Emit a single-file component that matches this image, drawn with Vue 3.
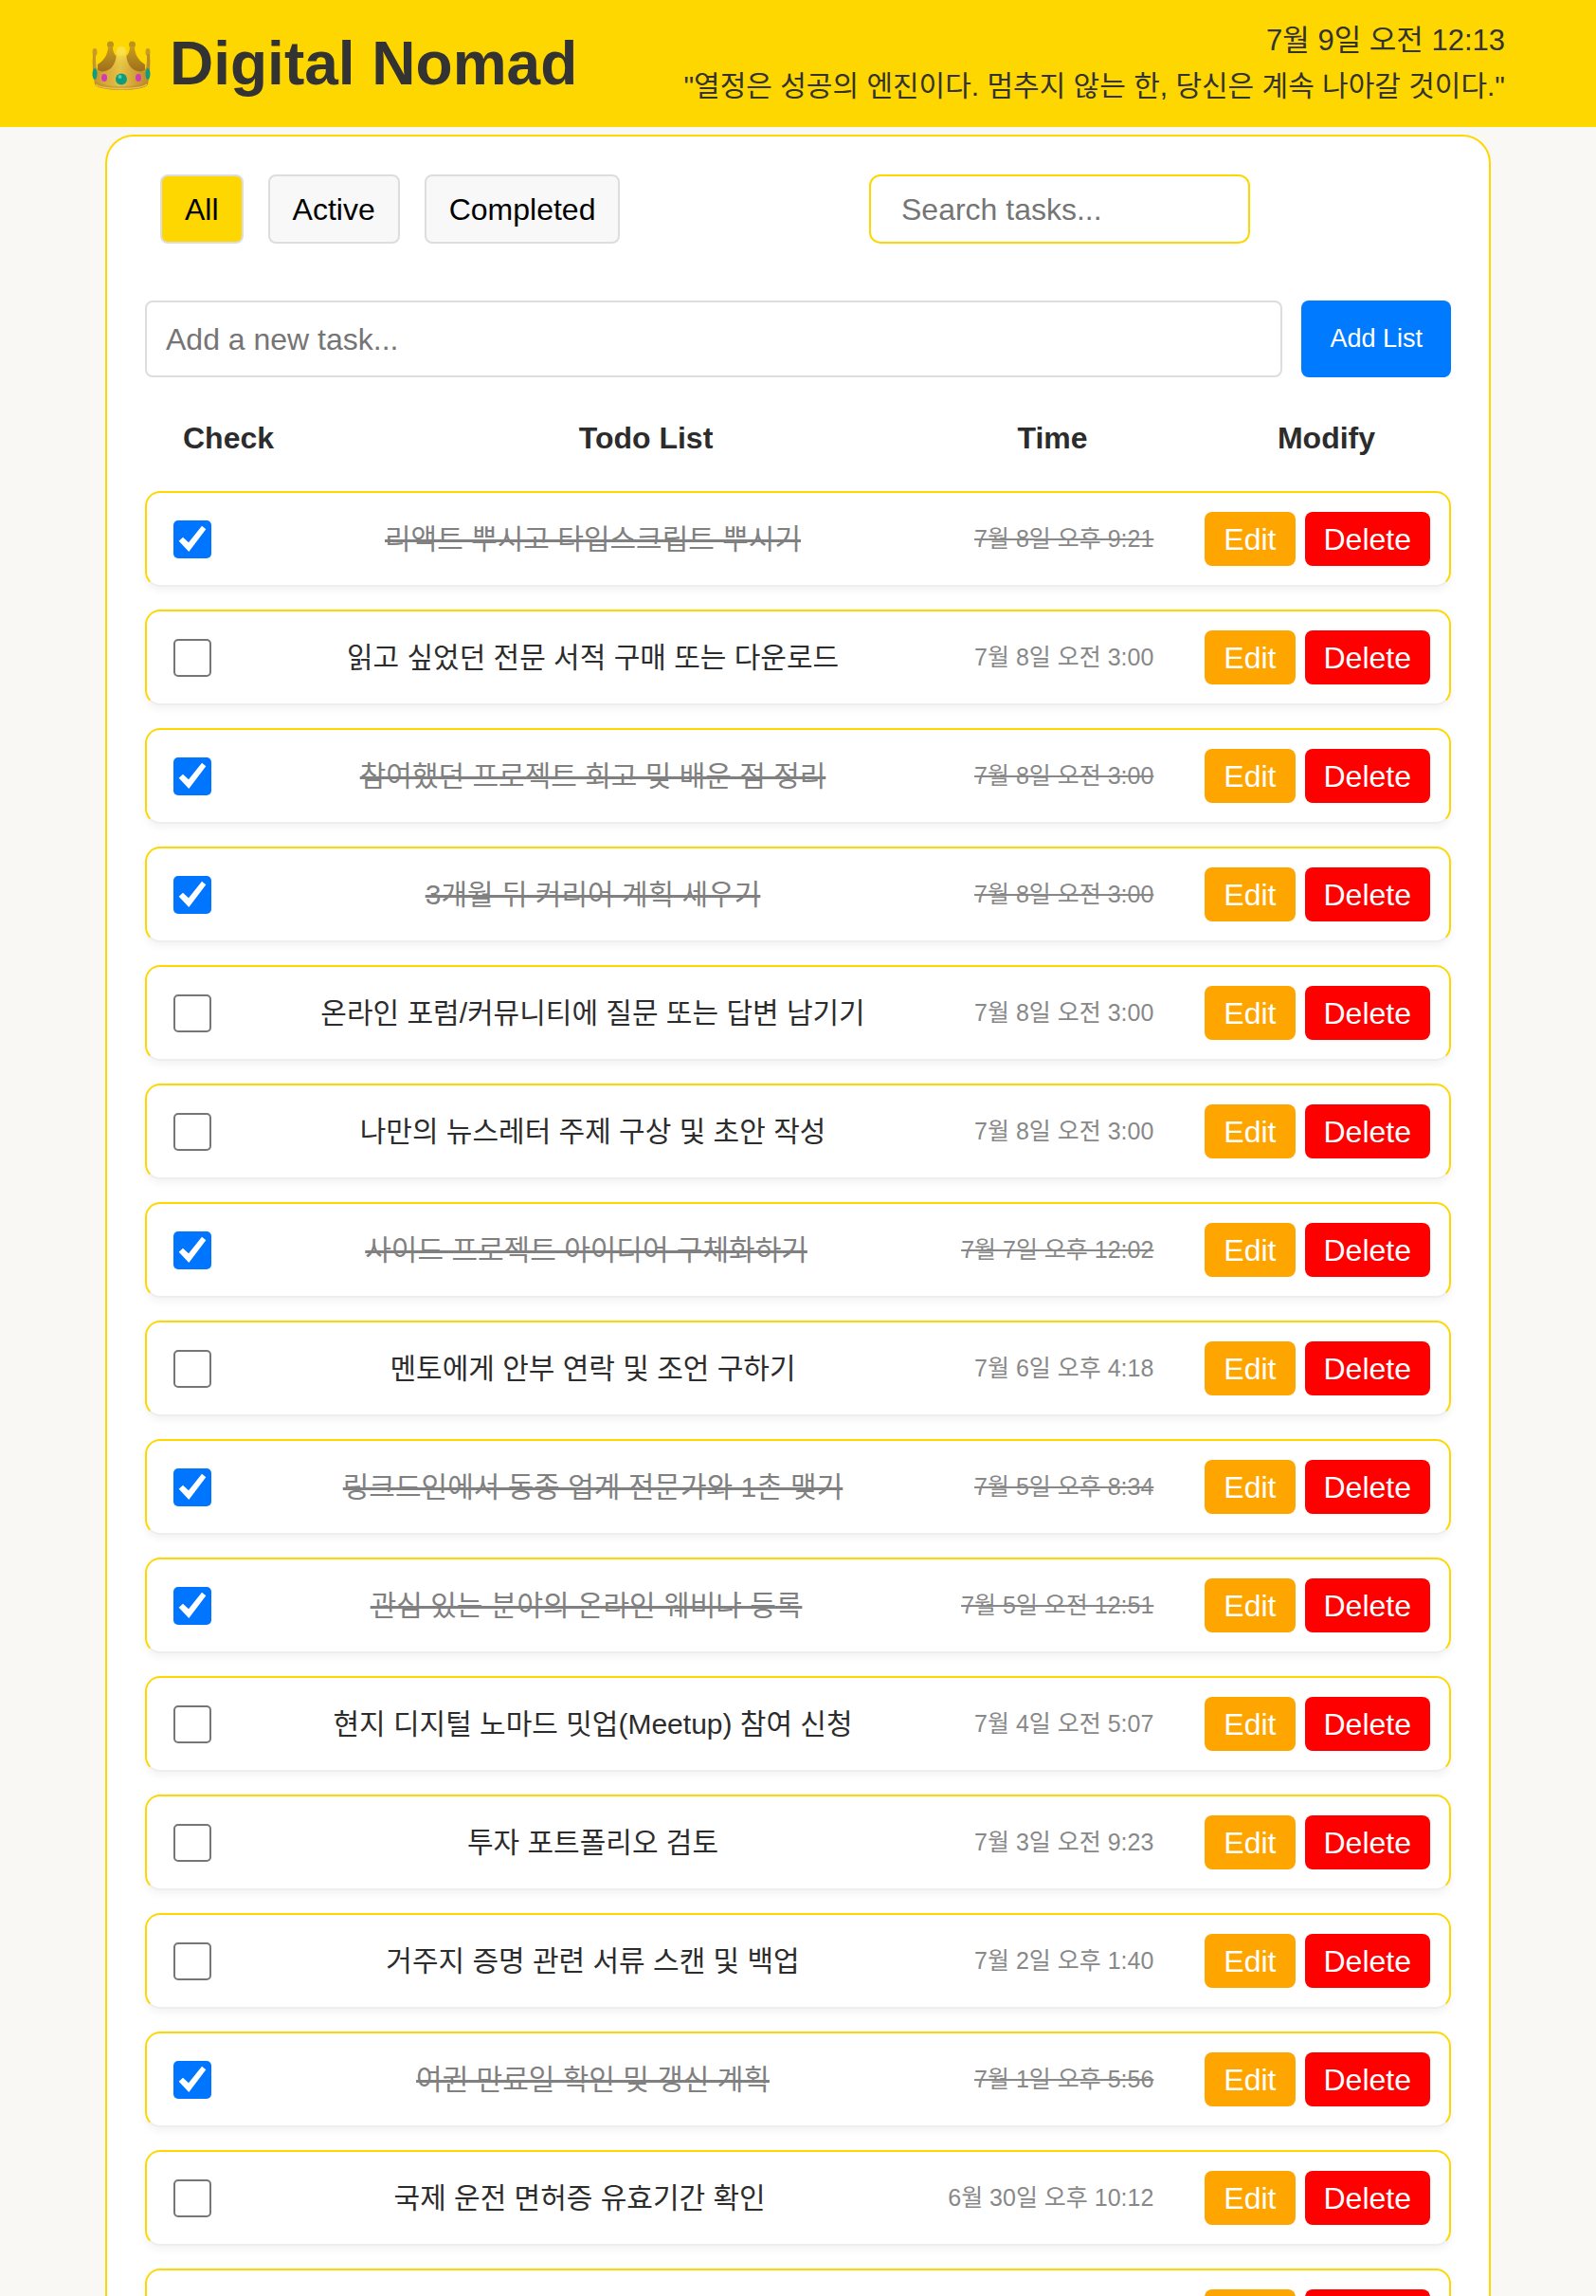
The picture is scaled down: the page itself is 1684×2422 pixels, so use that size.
<script setup>
import { computed, ref } from 'vue'

const filters = ['All', 'Active', 'Completed']
const filter = ref('All')
const search = ref('')
const draft = ref('')

const tasks = ref([
  { done: true, title: '리액트 뿌시고 타입스크립트 뿌시기', time: '7월 8일 오후 9:21' },
  { done: false, title: '읽고 싶었던 전문 서적 구매 또는 다운로드', time: '7월 8일 오전 3:00' },
  { done: true, title: '참여했던 프로젝트 회고 및 배운 점 정리', time: '7월 8일 오전 3:00' },
  { done: true, title: '3개월 뒤 커리어 계획 세우기', time: '7월 8일 오전 3:00' },
  { done: false, title: '온라인 포럼/커뮤니티에 질문 또는 답변 남기기', time: '7월 8일 오전 3:00' },
  { done: false, title: '나만의 뉴스레터 주제 구상 및 초안 작성', time: '7월 8일 오전 3:00' },
  { done: true, title: '사이드 프로젝트 아이디어 구체화하기', time: '7월 7일 오후 12:02' },
  { done: false, title: '멘토에게 안부 연락 및 조언 구하기', time: '7월 6일 오후 4:18' },
  { done: true, title: '링크드인에서 동종 업계 전문가와 1촌 맺기', time: '7월 5일 오후 8:34' },
  { done: true, title: '관심 있는 분야의 온라인 웨비나 등록', time: '7월 5일 오전 12:51' },
  { done: false, title: '현지 디지털 노마드 밋업(Meetup) 참여 신청', time: '7월 4일 오전 5:07' },
  { done: false, title: '투자 포트폴리오 검토', time: '7월 3일 오전 9:23' },
  { done: false, title: '거주지 증명 관련 서류 스캔 및 백업', time: '7월 2일 오후 1:40' },
  { done: true, title: '여권 만료일 확인 및 갱신 계획', time: '7월 1일 오후 5:56' },
  { done: false, title: '국제 운전 면허증 유효기간 확인', time: '6월 30일 오후 10:12' },
  { done: false, title: '', time: '' },
])

const visible = computed(() =>
  tasks.value.filter(
    (t) =>
      (filter.value === 'All' || t.done === (filter.value === 'Completed')) &&
      t.title.includes(search.value),
  ),
)

function addTask() {
  if (!draft.value.trim()) return
  tasks.value.unshift({ done: false, title: draft.value.trim(), time: '' })
  draft.value = ''
}

function removeTask(task) {
  tasks.value = tasks.value.filter((t) => t !== task)
}
</script>

<template>
  <div class="page">
    <header class="banner">
      <h1 class="brand">
        <svg class="crown" viewBox="0 0 64 64" aria-hidden="true">
          <defs>
            <linearGradient id="gold" x1="0" y1="0" x2="1" y2="0">
              <stop offset="0" stop-color="#c4932a" />
              <stop offset=".18" stop-color="#d3a535" />
              <stop offset=".48" stop-color="#e6c246" />
              <stop offset=".8" stop-color="#cc9a33" />
              <stop offset="1" stop-color="#b98a28" />
            </linearGradient>
            <linearGradient id="inner" x1="0" y1="0" x2="0" y2="1">
              <stop offset="0" stop-color="#c79c1c" />
              <stop offset="1" stop-color="#9a6a1c" />
            </linearGradient>
            <linearGradient id="spike" x1="0" y1="0" x2="0" y2="1">
              <stop offset="0" stop-color="#fbe04a" />
              <stop offset="1" stop-color="#e0b93f" stop-opacity="0" />
            </linearGradient>
          </defs>
          <circle cx="20.500" cy="12" r="3.500" fill="#bd931a" />
          <circle cx="43.500" cy="12" r="3.500" fill="#bd931a" />
          <path d="M18 14h5c0 6 2 9 5 11L20 43 7 41V33C14 29 18 22 18 14Z" fill="url(#inner)" />
          <path d="M46 14h-5c0 6-2 9-5 11l8 18 13-2V33C50 29 46 22 46 14Z" fill="url(#inner)" />
          <ellipse cx="4" cy="20" rx="2.500" ry="4" fill="#c99c22" />
          <ellipse cx="60" cy="20" rx="2.500" ry="4" fill="#c99c22" />
          <path
            d="M2 22h3c0 6 0 11 1 15 2 3 5 4 9 3 8-2 12-10 12-20h10c0 10 4 18 12 20 4 1 7 0 9-3 1-4 1-9 1-15h3c1 10 0 22-2 32-4 8-52 8-56 0C2 44 1 32 2 22Z"
            fill="url(#gold)"
          />
          <circle cx="32" cy="19" r="5" fill="#fbe04a" />
          <path d="M27 20h10c0 10 3 17 8 20H19c5-3 8-10 8-20Z" fill="url(#spike)" />
          <path d="M4 50c6 8 50 8 56 0v4c-6 8-50 8-56 0Z" fill="#b98728" opacity=".45" />
          <path d="M5 54c8 6 46 6 54 0" fill="none" stroke="#e6c44a" stroke-width="1.500" />
          <ellipse cx="4" cy="43" rx="2.500" ry="6" fill="#149b7d" />
          <ellipse cx="60" cy="43" rx="2.500" ry="6" fill="#149b7d" />
          <ellipse cx="14" cy="47" rx="3" ry="4" fill="#d23bb5" />
          <ellipse cx="50" cy="47" rx="3" ry="4" fill="#d23bb5" />
          <circle cx="32" cy="48.500" r="6" fill="#0f9c7c" />
          <circle cx="30.500" cy="46" r="2" fill="#58cbb0" />
        </svg>
        <span>Digital Nomad</span>
      </h1>
      <div class="status">
        <time class="now">7월 9일 오전 12:13</time>
        <p class="quote">"열정은 성공의 엔진이다. 멈추지 않는 한, 당신은 계속 나아갈 것이다."</p>
      </div>
    </header>

    <main class="card">
      <div class="toolbar">
        <div class="filters">
          <button
            v-for="name in filters"
            :key="name"
            type="button"
            class="filter"
            :class="{ active: filter === name }"
            @click="filter = name"
          >
            {{ name }}
          </button>
        </div>
        <input v-model="search" class="search" type="text" placeholder="Search tasks..." aria-label="Search tasks" />
      </div>

      <form class="add" @submit.prevent="addTask">
        <input v-model="draft" class="add-input" type="text" placeholder="Add a new task..." aria-label="New task" />
        <button class="add-button" type="submit">Add List</button>
      </form>

      <table class="list">
        <thead>
          <tr class="head">
            <th class="head-check">Check</th>
            <th>Todo List</th>
            <th>Time</th>
            <th>Modify</th>
          </tr>
        </thead>
        <tbody class="rows">
          <tr v-for="(task, i) in visible" :key="i" class="row" :class="{ done: task.done }">
            <td class="cell-check">
              <input v-model="task.done" class="check" type="checkbox" :aria-label="task.title" />
            </td>
            <td class="cell-title">{{ task.title }}</td>
            <td class="cell-time">{{ task.time }}</td>
            <td class="cell-actions">
              <button type="button" class="action edit">Edit</button>
              <button type="button" class="action delete" @click="removeTask(task)">Delete</button>
            </td>
          </tr>
        </tbody>
      </table>
    </main>
  </div>
</template>

<style>
body {
  margin: 0;
  background: #f9f8f4;
}
</style>

<style scoped>
.page {
  box-sizing: border-box;
  height: 100vh;
  overflow: hidden;
  color: #2c2c2c;
  font-family: "Liberation Sans", "Noto Sans CJK KR", sans-serif;
  font-size: 32px;
  line-height: 37px;
}

button,
input {
  box-sizing: border-box;
  margin: 0;
  font: inherit;
}

button {
  cursor: pointer;
}

.banner {
  display: flex;
  align-items: center;
  justify-content: space-between;
  padding: 19px 96px;
  background: #ffd700;
  color: #333;
}

.brand {
  display: flex;
  align-items: center;
  gap: 19px;
  margin: 0;
  font-size: 64px;
  line-height: 74px;
  white-space: nowrap;
}

.crown {
  width: 64px;
  height: 64px;
}

.status {
  display: flex;
  flex-direction: column;
  text-align: right;
  line-height: 48px;
}

.now {
  font-size: 31px;
}

.quote {
  margin: 0;
  font-size: 30px;
}

.card {
  margin: 8px 111px 0;
  padding: 40px;
  border: 2px solid #ffd700;
  border-radius: 30px;
  background: #fff;
}

.toolbar {
  display: flex;
  justify-content: space-between;
  padding: 0 212px 0 16px;
  margin-bottom: 60px;
}

.filters {
  display: flex;
  gap: 26px;
}

.filter {
  padding: 17px 24px 15px;
  border: 2px solid #ddd;
  border-radius: 8px;
  background: #f8f8f8;
  color: #000;
}

.filter.active {
  background: #ffd700;
}

.search {
  width: 402px;
  padding: 17px 32px 15px;
  border: 2px solid #ffd700;
  border-radius: 12px;
  background: #fff;
}

.add {
  display: flex;
  gap: 20px;
  margin-bottom: 46px;
}

.add-input {
  flex: 1;
  min-width: 0;
  padding: 21px 20px 19px;
  border: 2px solid #ddd;
  border-radius: 8px;
  background: #fff;
}

.search::placeholder,
.add-input::placeholder {
  color: #757575;
  opacity: 1;
}

.add-button {
  padding: 0 30px;
  border: 0;
  border-radius: 8px;
  background: #007bff;
  color: #fff;
  font-size: 27px;
}

.list {
  display: block;
}

.list thead {
  display: block;
}

.head {
  display: grid;
  grid-template-columns: 257px 1fr 315px 263px;
  margin-bottom: 37px;
}

.head th {
  padding: 0;
  font-weight: bold;
}

.head .head-check {
  padding-left: 40px;
  text-align: left;
}

.rows {
  display: flex;
  flex-direction: column;
  gap: 24px;
}

.row {
  display: flex;
  align-items: center;
  padding: 20px;
  border: 2px solid #ffd700;
  border-bottom-color: #eee;
  border-radius: 16px;
  background: #fff;
  box-shadow: 0 4px 8px rgba(0, 0, 0, 0.05);
}

.row td {
  padding: 0;
}

.row .cell-check {
  display: flex;
  padding-left: 8px;
}

.check {
  appearance: none;
  width: 40px;
  height: 40px;
  border: 2px solid #767676;
  border-radius: 5px;
  background: #fff;
}

.check:checked {
  border: 0;
  background: #0075ff
    url("data:image/svg+xml,%3Csvg xmlns='http://www.w3.org/2000/svg' viewBox='0 0 40 40'%3E%3Cpath d='M5.700 21.700 10 17.700 16 23.300 30 5.700 34.300 9.300 16.300 33Z' fill='white'/%3E%3C/svg%3E")
    center / 40px 40px no-repeat;
}

.cell-title {
  flex: 1;
  font-size: 30px;
  text-align: center;
}

.cell-time {
  color: #888;
  font-size: 25px;
  white-space: nowrap;
}

.row .cell-actions {
  display: flex;
  gap: 10px;
  padding-left: 54px;
}

.action {
  padding: 11px 20px 9px;
  border: 0;
  border-radius: 8px;
  color: #fff;
}

.edit {
  background: #ffa500;
}

.delete {
  background: #f00;
}

.done .cell-title {
  color: #808080;
  text-decoration: line-through 3px;
}

.done .cell-time {
  text-decoration: line-through 2px;
}
</style>
